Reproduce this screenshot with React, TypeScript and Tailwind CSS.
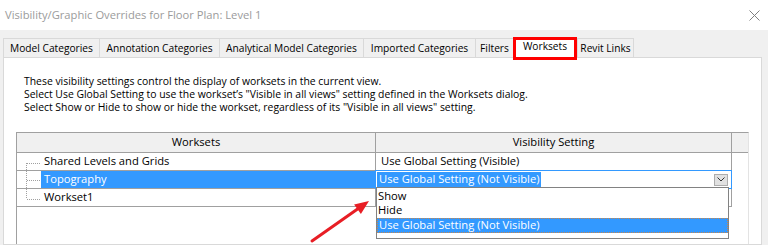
const tabs = [
  { label: 'Model Categories', cls: 'w-[96px]' },
  { label: 'Annotation Categories', cls: 'w-[120px]' },
  { label: 'Analytical Model Categories', cls: 'w-[144px]' },
  { label: 'Imported Categories', cls: 'w-[112px]' },
  { label: 'Filters', cls: 'w-[38px]' },
];

function Tab({ label, cls }: { label: string; cls: string }) {
  return (
    <div className={`${cls} h-[19px] border-l border-t border-[#d9d9d9] bg-[#f0f0f0] flex items-center justify-center pt-[2px] whitespace-nowrap`}>
      {label}
    </div>
  );
}

export default function App() {
  return (
    <div className="relative w-[768px] h-[245px] overflow-hidden bg-[#f0f0f0] flex flex-col font-['Open_Sans',sans-serif] text-[10.2px] text-black">
      {/* title bar */}
      <div className="h-[30px] shrink-0 bg-white flex items-center justify-between pl-[5px] pr-[8px]">
        <span className="text-[#9b9b9b] text-[11.2px]">Visibility/Graphic Overrides for Floor Plan: Level 1</span>
        <svg width="11" height="11" viewBox="0 0 11 11">
          <path d="M0.5 0.5 L10.5 10.5 M10.5 0.5 L0.5 10.5" stroke="#808080" strokeWidth="1" />
        </svg>
      </div>

      {/* tabs */}
      <div className="h-[27px] shrink-0 flex items-end pl-[3px]">
        {tabs.map((t) => (
          <Tab key={t.label} label={t.label} cls={t.cls} />
        ))}
        <div className="relative z-10 w-[64px] h-[23px] -mb-[3px] border-[3px] border-[#ff0000] bg-white flex items-center justify-center pb-[3px]">
          Worksets
        </div>
        <div className="w-[57px] h-[19px] border-x border-t border-[#d9d9d9] bg-[#f0f0f0] flex items-center justify-center pt-[2px] whitespace-nowrap">
          Revit Links
        </div>
      </div>

      {/* panel */}
      <div className="flex-1 ml-[3px] w-[759px] bg-white border border-[#d9d9d9] flex flex-col">
        <div className="pt-[17px] pl-[20px] leading-[13px] text-[10.4px] whitespace-nowrap">
          <div>These visibility settings control the display of worksets in the current view.</div>
          <div>Select Use Global Setting to use the workset’s "Visible in all views" setting defined in the Worksets dialog.</div>
          <div>Select Show or Hide to show or hide the workset, regardless of its "Visible in all views" setting.</div>
        </div>

        <div className="flex-1 mt-[18px] ml-[12px] w-[733px] border-l border-t border-[#a0a0a0] border-r border-r-[#e3e3e3] flex flex-col text-[11.2px]">
          {/* header */}
          <div className="h-[20px] flex bg-[#f0f0f0] border-b border-[#a0a0a0]">
            <div className="w-[359px] border-r border-[#a0a0a0] flex items-center justify-center">Worksets</div>
            <div className="w-[356px] border-r border-[#a0a0a0] flex items-center justify-center">Visibility Setting</div>
            <div className="flex-1" />
          </div>

          {/* row 1 */}
          <div className="h-[18px] flex">
            <div className="w-[359px] border-r border-b border-[#a0a0a0] flex items-center pl-[27px]">Shared Levels and Grids</div>
            <div className="w-[356px] border-r border-b border-[#a0a0a0] flex items-center pl-[5px]">Use Global Setting (Visible)</div>
            <div className="flex-1" />
          </div>

          {/* row 2 */}
          <div className="h-[18px] flex">
            <div className="w-[359px] border-r border-b border-[#a0a0a0] flex pl-[24px]">
              <div className="flex-1 bg-[#3399ff] text-white flex items-center pl-[3px]">Topography</div>
            </div>
            <div className="relative w-[356px] border-r border-b border-[#a0a0a0]">
              <div className="absolute -top-px -left-px -right-px -bottom-px border border-[#3399ff] bg-white flex items-center pl-[1px] pr-[3px]">
                <span className="bg-[#3399ff] text-white h-[15px] flex items-center pl-[2px] pr-[2px]">Use Global Setting (Not Visible)</span>
                <div className="ml-auto w-[14px] h-[12px] bg-[#e1e1e1] border border-[#adadad] flex items-center justify-center">
                  <svg width="8" height="5" viewBox="0 0 8 5">
                    <path d="M0.5 0.5 L4 4 L7.5 0.5" stroke="#333" strokeWidth="1" fill="none" />
                  </svg>
                </div>
              </div>
            </div>
            <div className="flex-1" />
          </div>

          {/* row 3 */}
          <div className="h-[18px] flex">
            <div className="w-[359px] border-r border-b border-[#a0a0a0] flex items-center pl-[27px]">Workset1</div>
            <div className="w-[356px] border-r border-b border-[#a0a0a0]" />
            <div className="flex-1" />
          </div>
        </div>
      </div>

      {/* dropdown list */}
      <div className="absolute left-[376px] top-[187px] w-[353px] h-[52px] bg-white border border-[#828282] pt-[1px] z-20 text-[11.2px]">
        <div className="h-[14.5px] flex items-center pl-[1px]">Show</div>
        <div className="h-[14.5px] flex items-center pl-[1px]">Hide</div>
        <div className="h-[14.5px] flex items-center pl-[1px] bg-[#3399ff] text-white border border-dotted border-[#c8864a]">
          Use Global Setting (Not Visible)
        </div>
      </div>

      {/* tree connectors */}
      <svg className="absolute left-0 top-0 pointer-events-none" width="768" height="245" shapeRendering="crispEdges">
        <g stroke="#a0a0a0" strokeWidth="1" strokeDasharray="1 1" fill="none">
          <path d="M26.5 163 V199" />
          <path d="M27 163.5 H41" />
          <path d="M27 180.5 H41" />
          <path d="M27 199.5 H41" />
        </g>
      </svg>

      {/* red arrow */}
      <svg className="absolute left-0 top-0 pointer-events-none z-30" width="768" height="245">
        <path d="M312 241 L359 208" stroke="#e81e25" strokeWidth="3" strokeLinecap="round" />
        <path d="M369 201 L360.9 214.1 L354.1 204.4 Z" fill="#e81e25" />
      </svg>
    </div>
  );
}
